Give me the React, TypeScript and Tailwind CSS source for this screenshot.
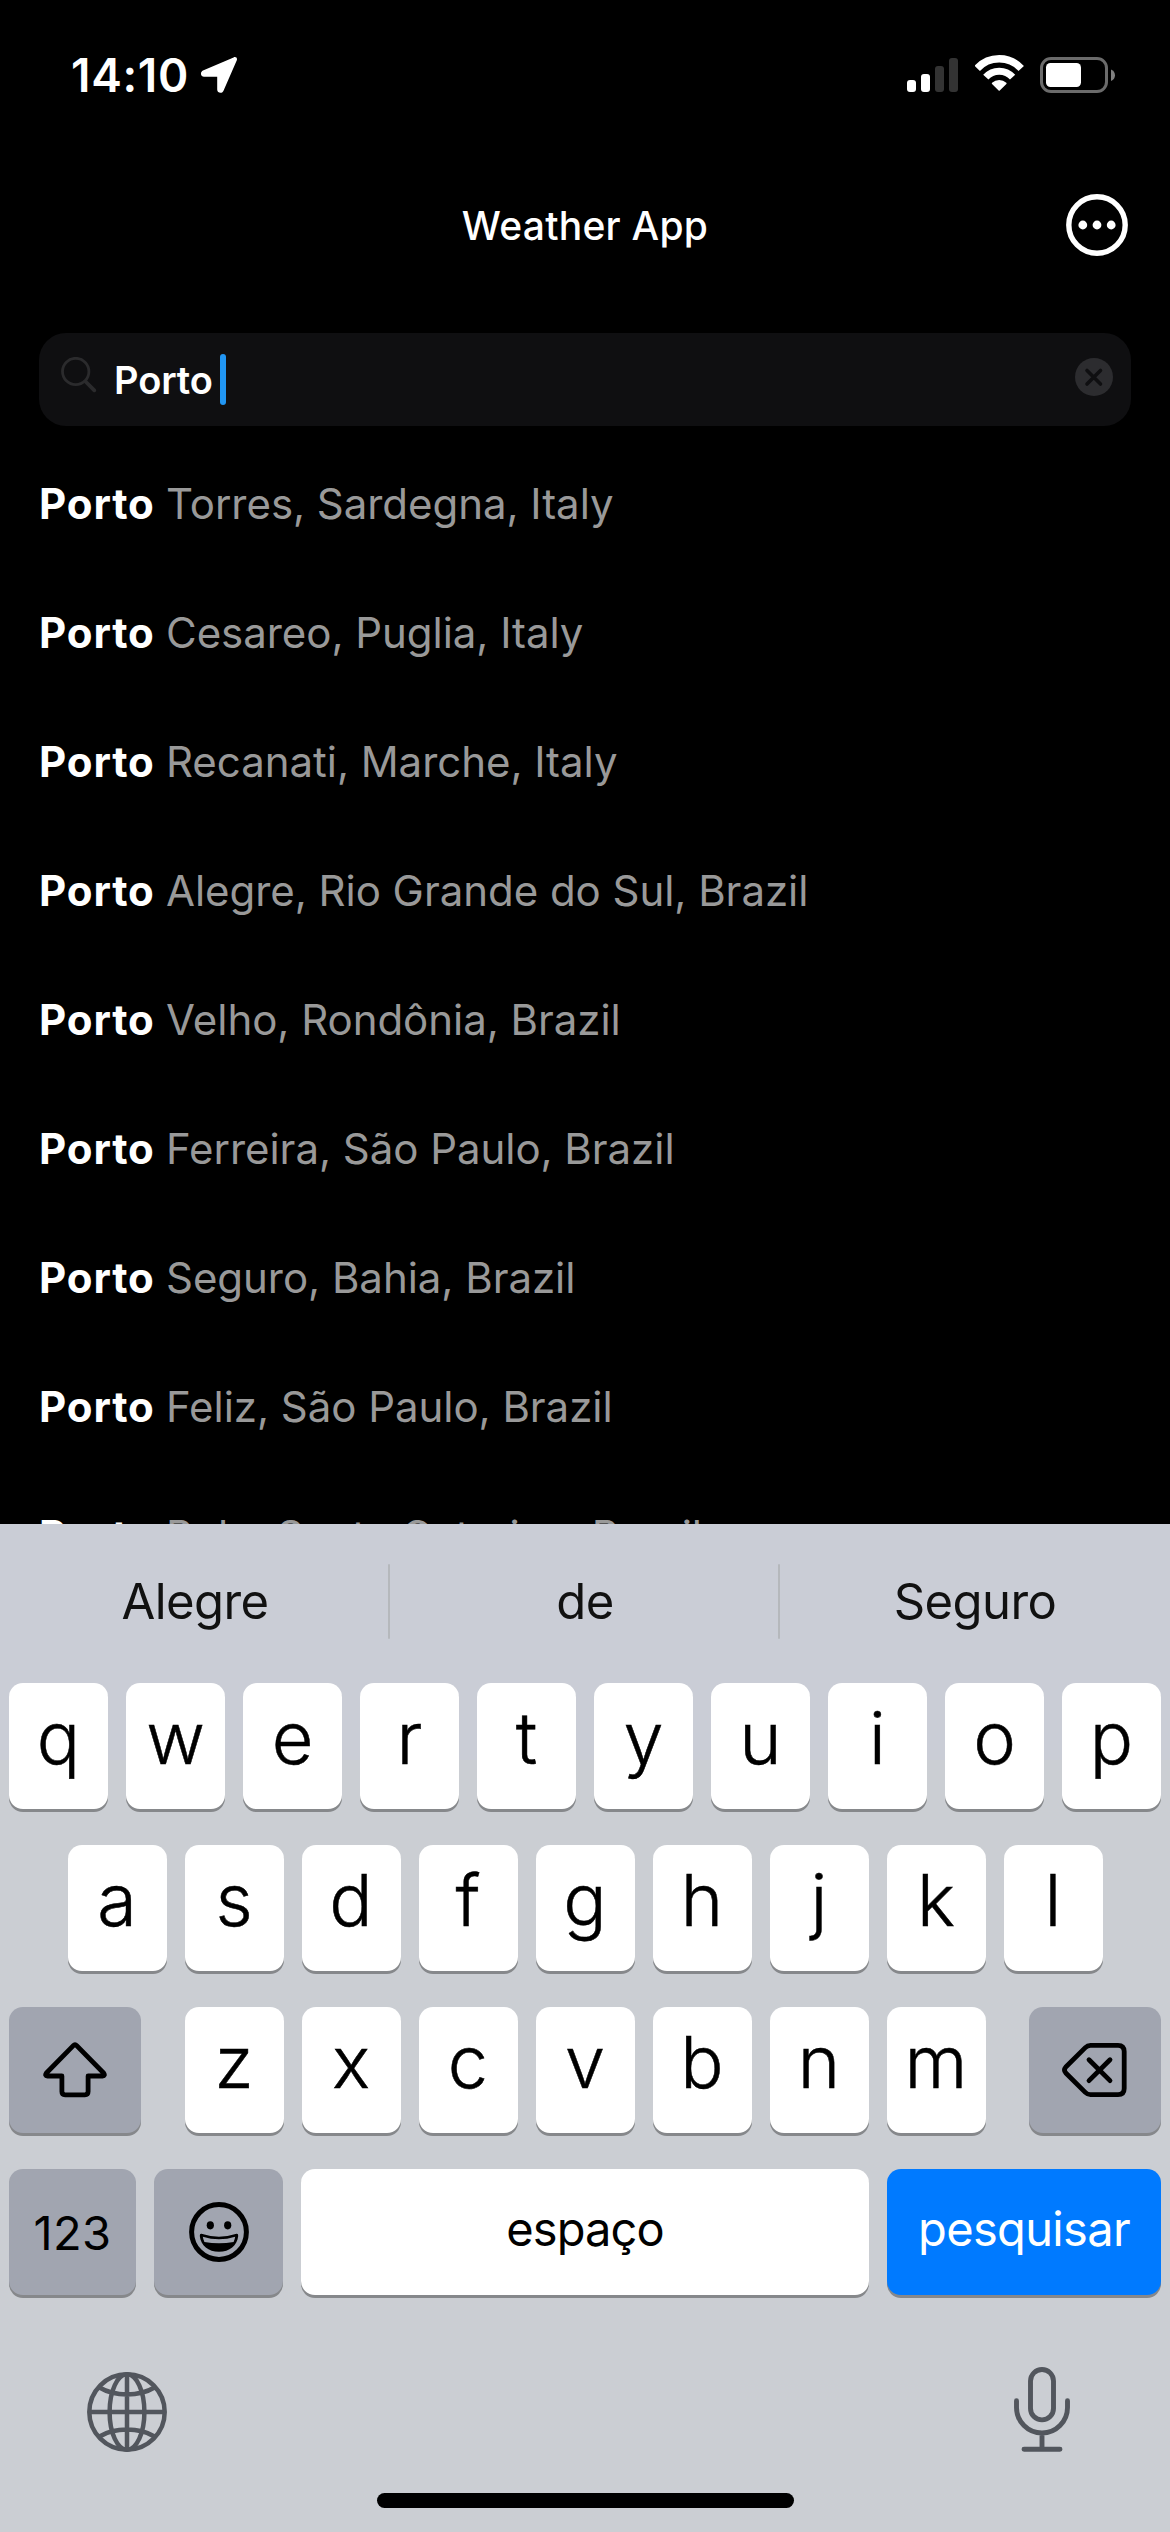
import type { ReactNode } from "react";

const places = [
  "Torres, Sardegna, Italy",
  "Cesareo, Puglia, Italy",
  "Recanati, Marche, Italy",
  "Alegre, Rio Grande do Sul, Brazil",
  "Velho, Rondônia, Brazil",
  "Ferreira, São Paulo, Brazil",
  "Seguro, Bahia, Brazil",
  "Feliz, São Paulo, Brazil",
  "Belo, Santa Catarina, Brazil",
];

const suggestions = ["Alegre", "de", "Seguro"];

function StatusBar() {
  return (
    <div className="flex h-[149px] shrink-0 items-center justify-between pl-[71px] pr-[54px]">
      <div className="flex items-center">
        <span className="w-[130px] text-[46px] font-semibold leading-none tracking-[0.7px]">14:10</span>
        <svg width="36" height="36" viewBox="0 0 36 36" className="mt-px" fill="white">
          <path d="M32.6.4C35-.6 36.7 1.2 35.7 3.6L22.4 33.9C20.9 37.1 16.2 36.1 16.2 32.5V19.8H3C-.5 19.8-1.2 15.2 2 13.6Z" />
        </svg>
      </div>
      <div className="flex items-center">
        <div className="flex h-[34px] w-[68px] items-end gap-[5px]">
          <i className="h-[12px] w-[9px] rounded-[3px] bg-white" />
          <i className="h-[18px] w-[9px] rounded-[3px] bg-white" />
          <i className="h-[26px] w-[9px] rounded-[3px] bg-[#333]" />
          <i className="h-[34px] w-[9px] rounded-[3px] bg-[#333]" />
        </div>
        <svg width="49" height="37" viewBox="0 0 49 37" className="mr-4 -mt-[2px]" fill="none" stroke="white">
          <path d="M2.2 13.4A30 30 0 0 1 46.2 13.4" strokeWidth="7.4" />
          <path d="M10.8 22.2A18 18 0 0 1 37.6 22.2" strokeWidth="7" />
          <path d="M24.2 35L17.6 28.4A10 10 0 0 1 30.8 28.4Z" fill="white" strokeWidth="1.6" strokeLinejoin="round" />
        </svg>
        <svg width="76" height="36" viewBox="0 0 76 36" fill="none">
          <rect x="1.5" y="1.5" width="65" height="33" rx="9.5" stroke="#6b6b6b" strokeWidth="3" />
          <rect x="6" y="6" width="35" height="24" rx="4.5" fill="white" />
          <path d="M71 12.5C76.3 14.5 76.3 21.8 71 24Z" fill="#808080" />
        </svg>
      </div>
    </div>
  );
}

function Header() {
  return (
    <header className="grid h-[152px] shrink-0 grid-cols-[1fr_auto_1fr] items-center px-[42px]">
      <span />
      <h1 className="text-[39px] font-medium leading-none tracking-[0.25px]">Weather App</h1>
      <button className="justify-self-end">
        <svg width="62" height="62" viewBox="0 0 62 62" fill="none">
          <circle cx="31" cy="31" r="28.2" stroke="white" strokeWidth="5.4" />
          <g fill="white">
            <circle cx="16.8" cy="31" r="4.4" />
            <circle cx="31" cy="31" r="4.4" />
            <circle cx="45.2" cy="31" r="4.4" />
          </g>
        </svg>
      </button>
    </header>
  );
}

function SearchField() {
  return (
    <div className="mx-[39px] mt-8 flex h-[93px] shrink-0 items-center rounded-[27px] bg-[#0f0f11] pl-[22px] pr-[18px]">
      <svg width="36" height="36" viewBox="0 0 36 36" className="mb-[10px]" fill="none" stroke="#2b2b2d" strokeLinecap="round">
        <circle cx="14.7" cy="14.5" r="13.2" strokeWidth="2.8" />
        <path d="M24.5 24.5L33.3 33.3" strokeWidth="3.8" />
      </svg>
      <span className="ml-[17px] w-[106px] text-[38px] font-semibold leading-none tracking-[-0.1px]">Porto</span>
      <i className="h-[51px] w-[6px] rounded-full bg-[#2196f3]" />
      <svg width="38" height="38" viewBox="0 0 38 38" className="mb-[5px] ml-auto">
        <circle cx="19" cy="19" r="19" fill="#2c2c2f" />
        <path d="M12 12.5L25.5 26M25.5 12.5L12 26" stroke="#0f0f11" strokeWidth="3.6" strokeLinecap="round" />
      </svg>
    </div>
  );
}

function Results() {
  return (
    <ul className="mt-[13px] min-h-0 flex-1 overflow-hidden pl-[39px]">
      {places.map((p) => (
        <li key={p} className="flex h-[129px] items-center whitespace-nowrap text-[42px] leading-none text-[#999]">
          <b className="w-[127px] font-bold tracking-[0.9px] text-white">Porto</b>
          <span className="tracking-[-0.04px]">{p}</span>
        </li>
      ))}
    </ul>
  );
}

function Key({ className = "", children }: { className?: string; children: ReactNode }) {
  return (
    <button className={`flex h-[126px] items-center justify-center rounded-[14px] leading-none shadow-[0_3px_0_#86888b] ${className}`}>
      {children}
    </button>
  );
}

function Letters({ keys }: { keys: string }) {
  return (
    <div className="flex gap-[18px]">
      {keys.split("").map((k) => (
        <Key key={k} className="w-[99px] bg-white pb-[16px] text-[72px] font-light [-webkit-text-stroke:0.5px_black]">
          {k}
        </Key>
      ))}
    </div>
  );
}

function ShiftIcon() {
  return (
    <svg width="64" height="56" viewBox="0 0 64 56" fill="none" stroke="black" strokeWidth="4.8" strokeLinejoin="round">
      <path d="M30.3 3.6Q32 1.8 33.7 3.6L60.6 31Q62.6 33.7 59.4 34H45.1V49.6Q45.1 52.8 41.9 52.8H22.1Q18.9 52.8 18.9 49.6V34H4.6Q1.4 33.7 3.4 31Z" />
    </svg>
  );
}

function DeleteIcon() {
  return (
    <svg width="66" height="54" viewBox="0 0 66 54" fill="none" stroke="black" strokeWidth="4.8" strokeLinecap="round" strokeLinejoin="round">
      <path d="M28.5 2.4H56Q62.2 2.4 62.2 8.6V45.4Q62.2 51.6 56 51.6H28.5Q25.5 51.6 23.3 49.4L3.8 30Q1.2 27 3.8 24L23.3 4.6Q25.5 2.4 28.5 2.4Z" />
      <path d="M27 16.8L48 37.6M48 16.8L27 37.6" />
    </svg>
  );
}

function EmojiIcon() {
  return (
    <svg width="60" height="60" viewBox="0 0 60 60" fill="none">
      <circle cx="30" cy="30" r="27.4" stroke="black" strokeWidth="5" />
      <ellipse cx="21.3" cy="23.3" rx="3.6" ry="4.1" fill="black" />
      <ellipse cx="38.7" cy="23.3" rx="3.6" ry="4.1" fill="black" />
      <path d="M12.4 31.8Q30 37.6 47.6 31.8Q49.4 31.6 49.2 34C48.2 43.5 40.6 49.8 30 49.8S11.8 43.5 10.8 34Q10.6 31.6 12.4 31.8Z" fill="black" />
      <path d="M13.8 34.8Q30 39.8 46.2 34.8Q45.8 37.6 44.6 40Q30 42.6 15.4 40Q14.2 37.6 13.8 34.8Z" fill="#a1a5b0" />
    </svg>
  );
}

function GlobeIcon() {
  return (
    <svg width="80" height="80" viewBox="0 0 80 80" fill="none" stroke="#52565d" strokeWidth="4.5">
      <circle cx="40" cy="40" r="37.7" />
      <ellipse cx="40" cy="40" rx="17.4" ry="37.7" />
      <path d="M40 2V78M2 40H78M12.5 15.5Q24 22.4 40 22.4T67.5 15.5M12.5 64.5Q24 57.6 40 57.6T67.5 64.5" />
    </svg>
  );
}

function MicIcon() {
  return (
    <svg width="56" height="85" viewBox="0 0 56 85" fill="none" stroke="#52565d" strokeWidth="4.9" strokeLinecap="round">
      <rect x="16.5" y="2.5" width="23" height="50.4" rx="11.5" />
      <path d="M2.5 33.8V40.5A25.5 25.5 0 0 0 53.5 40.5V33.8M28 66V82M10 82.2H46" />
    </svg>
  );
}

function Keyboard() {
  return (
    <div className="flex h-[1008px] shrink-0 flex-col bg-[linear-gradient(#cacdd6_236px,#cbced3_236px)] text-black">
      <div className="grid h-[154px] grid-cols-3 items-center text-[49px] leading-none text-[#111]">
        {suggestions.map((s, i) => (
          <div key={s} className="flex items-center">
            <span className="flex-1 text-center tracking-[-0.6px]">{s}</span>
            {i < 2 && <i className="-ml-[2px] h-[75px] w-[2px] rounded-full bg-[#b5b8bc]" />}
          </div>
        ))}
      </div>
      <div className="mt-[5px] flex flex-col gap-9 px-[9px]">
        <Letters keys="qwertyuiop" />
        <div className="flex justify-center">
          <Letters keys="asdfghjkl" />
        </div>
        <div className="flex justify-between">
          <Key className="w-[132px] bg-[#a1a5b0]">
            <ShiftIcon />
          </Key>
          <Letters keys="zxcvbnm" />
          <Key className="w-[132px] bg-[#a1a5b0]">
            <DeleteIcon />
          </Key>
        </div>
        <div className="flex gap-[18px] text-[47px]">
          <Key className="w-[127px] bg-[#a1a5b0] tracking-[0.4px]">123</Key>
          <Key className="w-[129px] bg-[#a1a5b0]">
            <EmojiIcon />
          </Key>
          <Key className="w-[568px] bg-white pb-2 tracking-[-0.9px]">espaço</Key>
          <Key className="w-[274px] bg-[#007aff] pb-2 tracking-[-0.65px] text-white">pesquisar</Key>
        </div>
      </div>
      <div className="flex items-start justify-between pl-[87px] pr-[100px] pt-[72px]">
        <div className="pt-[5px]">
          <GlobeIcon />
        </div>
        <MicIcon />
      </div>
      <div className="mx-auto mb-[24px] mt-auto h-[15px] w-[417px] rounded-full bg-black" />
    </div>
  );
}

export default function App() {
  return (
    <div className="flex h-[2532px] w-[1170px] flex-col overflow-hidden bg-black font-['Inter',sans-serif] text-white">
      <StatusBar />
      <Header />
      <SearchField />
      <Results />
      <Keyboard />
    </div>
  );
}
